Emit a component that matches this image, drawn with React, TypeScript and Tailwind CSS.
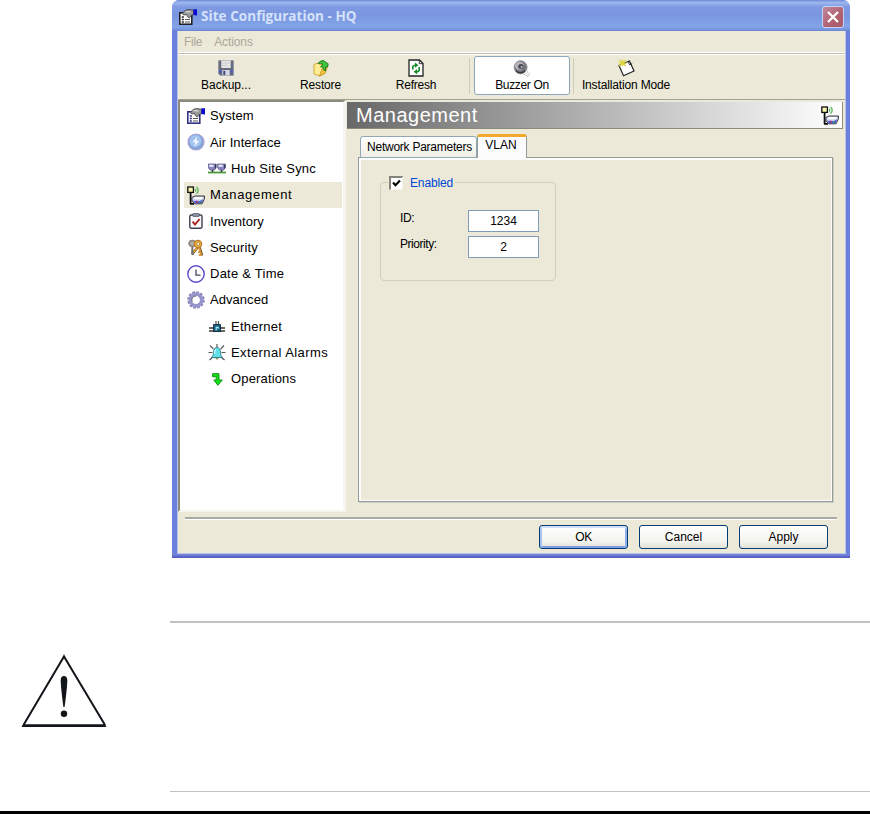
import React from 'react';
import clsx from 'clsx';

interface IconProps {
  className?: string;
}

interface NavItem {
  label: string;
  icon: React.ComponentType<IconProps>;
  tracking: string;
  child?: boolean;
  active?: boolean;
}

interface ToolItem {
  label: string;
  icon: React.ComponentType<IconProps>;
  width: string;
  tracking: string;
  active?: boolean;
}

function PropertiesIcon({ className = 'text-[#26267c]' }: IconProps) {
  return (
    <svg className={className} width="18" height="16" viewBox="0 0 18 16">
      <rect x=".8" y="3.8" width="12" height="11.400" fill="#fff" stroke="currentColor" strokeWidth="1.500" />
      <path d="M2.800 8h2M2.800 10.500h2M2.800 13h2" stroke="currentColor" strokeWidth="1.400" />
      <path d="M6 10.500h5M6 13h5" stroke="#555" strokeWidth="1.200" />
      <path d="M3.500 4.200 6.500 1.200 10 .6l4.500.6v4.600L12 6.500 10.500 9 8.500 7.800 7.500 5.500 4.500 6z" fill="#9a9a9a" stroke="#3a3a3a" strokeWidth=".8" />
      <path d="M6.500 2.800h5" stroke="#dcdcdc" strokeWidth="1.200" />
      <path d="M14.400.2H18V6.500l-3.600-.5z" fill="#0b0bd2" />
    </svg>
  );
}

function AirIcon({ className }: IconProps) {
  return (
    <svg className={className} width="18" height="18" viewBox="0 0 18 18">
      <circle cx="9" cy="9" r="8" fill="#86a4dc" stroke="#a9a2d2" strokeWidth="1.200" />
      <circle cx="8.500" cy="8" r="6" fill="#a3c4ee" />
      <path d="M10.300 3.500 5.500 9.300h2.800L7.300 14l5-6.300H9.400z" fill="#f4f9ff" />
    </svg>
  );
}

function HubIcon({ className }: IconProps) {
  return (
    <svg className={className} width="18" height="11" viewBox="0 0 18 11">
      <path d="M0 9.500h18" stroke="#4a9a3a" strokeWidth="1.800" />
      <path d="M4.500 6v3M13.500 6v3" stroke="#333" strokeWidth="1.500" />
      <path d="M.4 1h7.800v3.200L6.500 7H2.200L.4 4.800z" fill="#8585c4" stroke="#5a5a82" strokeWidth=".8" />
      <path d="M9.600 1h7.800v3.200L15.700 7h-4.300L9.600 4.800z" fill="#8585c4" stroke="#5a5a82" strokeWidth=".8" />
      <path d="M1.300 2.800h4.200M10.500 2.800h4.200" stroke="#eeeeff" strokeWidth="2" />
      <path d="M7.500 1.500v4M16.700 1.500v4" stroke="#333355" strokeWidth="1.200" />
    </svg>
  );
}

function ManagementIcon({ className }: IconProps) {
  return (
    <svg className={className} width="18" height="19" viewBox="0 0 18 19">
      <path d="M3.600 6v12M3 17.800h4" stroke="#111" strokeWidth="1.800" fill="none" />
      <rect x=".8" y="1" width="5.600" height="5.400" fill="#faf5ae" stroke="#111" strokeWidth="1.300" />
      <path d="M8 3q1.500 1.200 0 2.600M9.500 1q3.400 3 0 6.600" fill="none" stroke="#55b455" strokeWidth="1.300" />
      <path d="M4.800 11.500 8 10h9.500l-.3 3.500-2.200 4.300H7.500L5 15z" fill="#cfd5ee" stroke="#222" strokeWidth=".9" />
      <path d="M7 11.700 8.500 11h7.500l-1.500 2.300H7.500z" fill="#fff" />
      <path d="m5.500 13.500 2.300 3.700h6.700l1.800-4-2.300 1.300-2 .7-2.500-.7-2 .7z" fill="#4a52e0" />
      <path d="M9 15.800h2" stroke="#e03a3a" strokeWidth="1.300" />
      <path d="M12.200 16.200h2" stroke="#2aa855" strokeWidth="1.300" />
    </svg>
  );
}

function InventoryIcon({ className }: IconProps) {
  return (
    <svg className={className} width="14" height="16" viewBox="0 0 14 16">
      <rect x=".8" y="2" width="12.200" height="13.200" rx="1.400" fill="#fafaff" stroke="#3c4250" strokeWidth="1.400" />
      <rect x="3.500" y=".6" width="7" height="2.800" rx="1" fill="#8f97aa" stroke="#3c4250" strokeWidth=".7" />
      <path d="m3.600 8.600 2.400 3L10.600 6" fill="none" stroke="#ab2020" strokeWidth="1.900" />
    </svg>
  );
}

function SecurityIcon({ className }: IconProps) {
  return (
    <svg className={className} width="16" height="18" viewBox="0 0 16 18">
      <path d="M4.500 7 4 15.500M4 12.500h2M4 15h2" stroke="#77746e" strokeWidth="2" />
      <ellipse cx="4.300" cy="4.500" rx="3.200" ry="3" fill="#b0aca4" stroke="#8a867e" strokeWidth="1.600" />
      <path d="M11.500 8 14 16.500M10 8l-4.500 5.500" stroke="#6e5028" strokeWidth="2.600" />
      <path d="M11 8l2.300 8.500M9.800 8l-4 5" stroke="#e2a03a" strokeWidth="1.800" />
      <path d="M12.500 12.500l-2.500 1M13 15.500l-2.200 1" stroke="#c98a28" strokeWidth="1.400" />
      <circle cx="10" cy="5" r="3.700" fill="#eeb040" stroke="#b87f2a" strokeWidth="1.200" />
      <circle cx="10.200" cy="4.800" r="1.500" fill="#fff5dc" stroke="#8a6020" strokeWidth=".6" />
    </svg>
  );
}

function ClockIcon({ className }: IconProps) {
  return (
    <svg className={className} width="18" height="18" viewBox="0 0 18 18">
      <circle cx="9" cy="9" r="8.200" fill="#fdfdff" stroke="#5f48c8" strokeWidth="1.400" />
      <path d="M9 4.500v5.700h4.500" fill="none" stroke="#45455c" strokeWidth="1.300" />
    </svg>
  );
}

function GearIcon({ className }: IconProps) {
  return (
    <svg className={className} width="18" height="18" viewBox="0 0 18 18">
      <circle cx="9" cy="9" r="7.500" fill="none" stroke="#8686bc" strokeWidth="2.400" strokeDasharray="2.700 1.228" />
      <circle cx="9" cy="9" r="5.600" fill="none" stroke="#9696cc" strokeWidth="3.800" />
      <circle cx="8.800" cy="9" r="3.800" fill="#fff" />
      <path d="M5.200 10.500A3.900 3.900 0 0 1 9 5" fill="none" stroke="#666" strokeWidth="1" />
    </svg>
  );
}

function EthernetIcon({ className }: IconProps) {
  return (
    <svg className={className} width="16" height="12" viewBox="0 0 16 12">
      <path d="M0 7h5M11 7h5" stroke="#333" strokeWidth="1.400" />
      <path d="M0 10h16" stroke="#444" strokeWidth="1.600" />
      <path d="M7 0v4M9.500 0v4" stroke="#555" strokeWidth="1.200" />
      <rect x="4.600" y="3.600" width="6.800" height="6.800" fill="#186488" stroke="#123" strokeWidth=".9" />
      <path d="M7.200 9.500V6.300h2v1.500" fill="none" stroke="#a8e4fa" strokeWidth="1.200" />
    </svg>
  );
}

function AlarmIcon({ className }: IconProps) {
  return (
    <svg className={className} width="18" height="18" viewBox="0 0 18 18">
      <path d="m2 1.500 3.500 3.700M16 1.500l-3.500 3.700M.5 8.500h4M13.500 8.500h4M1.500 16 5 13M16.500 16 13 13M9 0v3" stroke="#555" strokeWidth="1.200" />
      <path d="M3.500 13.500q2-1.500 2-5Q5.700 3.500 9 3.500t3.500 5q0 3.500 2 5z" fill="#62e0ea" stroke="#2c7c88" strokeWidth=".9" />
      <path d="M7.500 5.500q-1 2-1 4.500" fill="none" stroke="#d4fbff" strokeWidth="1.200" />
      <path d="M7.500 14q1.500 2.600 3 0" fill="#e8d850" stroke="#555" strokeWidth=".8" />
    </svg>
  );
}

function OperationsIcon({ className }: IconProps) {
  return (
    <svg className={className} width="11" height="13" viewBox="0 0 11 13">
      <path d="M.6.700h6.400v6.300h3.300L5.900 12.300 1.800 7h2.400V3.700H.6z" fill="#14e014" stroke="#0a8a0a" strokeWidth=".9" />
    </svg>
  );
}

function BackupIcon({ className }: IconProps) {
  return (
    <svg className={className} width="16" height="16" viewBox="0 0 16 16">
      <path d="M.7.700h14.600v14.600H2.200L.7 13.800z" fill="#666a7c" stroke="#7a7e90" strokeWidth=".8" />
      <rect x="3.300" y=".5" width="9.400" height="7.500" fill="#e6e6e6" />
      <path d="M4.500 3h7M4.500 5.500h5" stroke="#cacad0" />
      <rect x="4.300" y="10" width="7.400" height="5.500" fill="#d5d8e4" />
      <rect x="5.300" y="10.800" width="2" height="4.200" fill="#444a78" />
      <path d="M1.200 11.500h2M12.800 11.500h2" stroke="#3b55f0" strokeWidth="2.200" />
    </svg>
  );
}

function RestoreIcon({ className }: IconProps) {
  return (
    <svg className={className} width="16" height="17" viewBox="0 0 16 17">
      <path d="M1 4.500 5 3l1.500 1.500 4.500-.3v9l-4 2.800-6-2z" fill="#fdeb96" stroke="#cfa028" strokeWidth=".9" />
      <path d="m6.500 16 2.800-7.500 5-1-2.300 6z" fill="#f4c23c" stroke="#c09020" strokeWidth=".8" />
      <path d="M5 3.500Q6.500.6 10 .7L9.700 0l5.500 3.800-.5 3.200h-2.200v4q-2.500-.5-2.800-4H7.500L10 4Q7 3 5 3.500z" fill="#3fc43f" stroke="#147014" strokeWidth=".8" />
    </svg>
  );
}

function RefreshIcon({ className }: IconProps) {
  return (
    <svg className={className} width="16" height="18" viewBox="0 0 16 18">
      <path d="M1 1h10.500L15 4.500V17H1z" fill="#fff" stroke="#222" strokeWidth="1.300" />
      <path d="M11.300 1v3.700H15" fill="none" stroke="#222" strokeWidth=".9" />
      <path d="M4.800 10.500V8q0-1.800 2.500-1.800M11.200 8v2.700q0 2-2.500 2" fill="none" stroke="#168a26" strokeWidth="1.600" />
      <path d="M7 3.600v5.200l3.400-2.600zM9 10.100v5.200l-3.400-2.600z" fill="#168a26" />
    </svg>
  );
}

function BuzzerIcon({ className }: IconProps) {
  return (
    <svg className={className} width="18" height="17" viewBox="0 0 18 17">
      <ellipse cx="7.600" cy="7.300" rx="6.500" ry="6.600" fill="#77777f" stroke="#9a9aa2" />
      <ellipse cx="6.500" cy="5.800" rx="4.600" ry="4" fill="#b4b4bc" />
      <ellipse cx="8" cy="6.500" rx="2.800" ry="2.500" fill="#4a4a54" />
      <circle cx="8.600" cy="7" r="1" fill="#c8c8ce" />
      <path d="M3 11q5 3.800 9-.5" fill="none" stroke="#3a3a40" strokeWidth="1.300" />
      <path d="m11 15 4-3.500M13 16l4-3M14.500 16.500l2-1.200" stroke="#999" strokeWidth=".9" strokeDasharray="1.200 .8" />
    </svg>
  );
}

function InstallIcon({ className }: IconProps) {
  return (
    <svg className={className} width="18" height="18" viewBox="0 0 18 18">
      <path d="M2 6.500 12.500 2l4.500 10L6.500 16.800z" fill="#fff" stroke="#222" strokeWidth="1.200" />
      <path d="m11.300 2.500 1.200 3.300 2.700-1" fill="none" stroke="#222" strokeWidth=".9" />
      <path d="M5.500.5v7M1.500 4h8.500M2.300 1l6.500 6M8.800 1l-6.500 6" stroke="#dcd43a" strokeWidth="1.200" />
    </svg>
  );
}

const navItems: NavItem[] = [
  { label: 'System', icon: PropertiesIcon, tracking: 'tracking-[0.05px]' },
  { label: 'Air Interface', icon: AirIcon, tracking: 'tracking-[0.05px]' },
  { label: 'Hub Site Sync', icon: HubIcon, tracking: 'tracking-[0.2px]', child: true },
  { label: 'Management', icon: ManagementIcon, tracking: 'tracking-[0.65px]', active: true },
  { label: 'Inventory', icon: InventoryIcon, tracking: 'tracking-[0.05px]' },
  { label: 'Security', icon: SecurityIcon, tracking: 'tracking-[0.1px]' },
  { label: 'Date & Time', icon: ClockIcon, tracking: 'tracking-[0.25px]' },
  { label: 'Advanced', icon: GearIcon, tracking: 'tracking-[0.05px]' },
  { label: 'Ethernet', icon: EthernetIcon, tracking: 'tracking-[0.25px]', child: true },
  { label: 'External Alarms', icon: AlarmIcon, tracking: 'tracking-[0.4px]', child: true },
  { label: 'Operations', icon: OperationsIcon, tracking: 'tracking-[0.15px]', child: true },
];

const tools: ToolItem[] = [
  { label: 'Backup...', icon: BackupIcon, width: 'w-[94px]', tracking: 'tracking-normal' },
  { label: 'Restore', icon: RestoreIcon, width: 'w-[95px]', tracking: 'tracking-[-0.15px]' },
  { label: 'Refresh', icon: RefreshIcon, width: 'w-[96px]', tracking: 'tracking-[-0.2px]' },
  { label: 'Buzzer On', icon: BuzzerIcon, width: 'w-[96px]', tracking: 'tracking-[-0.35px]', active: true },
  { label: 'Installation Mode', icon: InstallIcon, width: 'w-[98px]', tracking: 'tracking-[-0.15px]' },
];

function TitleBar() {
  return (
    <div className="flex h-[31px] shrink-0 items-center rounded-t-[7px] bg-[linear-gradient(#6f8ad8_0%,#9db8ee_8%,#7f9ae2_22%,#7a96e0_50%,#82a5e8_85%,#7b98e0_94%,#6883d0_100%)] pt-0.5 pr-[6px] pl-[7px]">
      <PropertiesIcon className="text-[#1a1a1a]" />
      <span className="ml-[4px] flex-1 font-['Open_Sans','Noto_Sans',sans-serif] text-[13.5px] font-bold tracking-[0.05px] whitespace-nowrap text-[#d5e2fa]">
        Site Configuration - HQ
      </span>
      <button className="flex h-[22px] w-[22px] items-center justify-center rounded-[3px] border border-[#c5d2f4] bg-[linear-gradient(135deg,#c08a9c,#b0606e_60%,#a85a68)]">
        <svg width="14" height="14" viewBox="0 0 14 14">
          <path d="m2 2 10 10M12 2 2 12" stroke="#fff" strokeWidth="2.300" />
        </svg>
      </button>
    </div>
  );
}

function Toolbar() {
  return (
    <div className="flex h-[44px] shrink-0 pt-[1px] pl-[1px]">
      {tools.map(({ label, icon: Icon, width, tracking, active }, index) => (
        <React.Fragment key={label}>
          {index >= 3 && (
            <div className={clsx('mt-[2px] h-[36px] w-px bg-[#cfccba]', index === 3 ? 'mr-[4px] ml-[5px]' : 'mr-[3px] ml-[3px]')} />
          )}
          <button
            className={clsx(
              'flex h-[39px] flex-col items-center justify-end rounded-[3px] border pb-[1px]',
              width,
              active ? 'border-[#8ba6bc] bg-white' : 'border-transparent'
            )}
          >
            <span className="flex h-[18px] items-center">
              <Icon />
            </span>
            <span className={clsx('text-[12px] leading-[16px] whitespace-nowrap', tracking)}>{label}</span>
          </button>
        </React.Fragment>
      ))}
    </div>
  );
}

function Sidebar() {
  return (
    <nav className="h-[412px] w-[168px] shrink-0 border-t-2 border-r-[3px] border-b-2 border-l-2 border-t-[#8c8a7c] border-r-[#f6f5ee] border-b-[#f6f5ee] border-l-[#8c8a7c] bg-white pt-[1px] pr-px pl-[4px]">
      {navItems.map(({ label, icon: Icon, tracking, child, active }) => (
        <div
          key={label}
          className={clsx('flex h-[26.3px] items-center', child ? 'pl-[23px]' : 'pl-[2px]', active && 'bg-[#ece9d8]')}
        >
          <span className="flex w-[20px] shrink-0 justify-center">
            <Icon />
          </span>
          <span className={clsx('ml-[4px] text-[13px] whitespace-nowrap', tracking)}>{label}</span>
        </div>
      ))}
    </nav>
  );
}

function Field({ label, value, tracking }: { label: string; value: string; tracking: string }) {
  return (
    <div className="flex h-[26px] items-start">
      <span className={clsx('w-[68px] text-[12px] leading-[16px]', tracking)}>{label}</span>
      <input
        readOnly
        value={value}
        className="h-[22px] w-[71px] border border-[#7f9db9] bg-white text-center text-[12px] outline-none"
      />
    </div>
  );
}

function VlanPanel() {
  return (
    <div className="-mt-px h-[345px] w-[475px] border border-[#919b9c] bg-[#ece9d8] pt-[19px] pl-[21px] shadow-[inset_2px_2px_0_#fcfcfa,inset_-1px_-1px_0_#fcfcfa,1px_1px_0_#d0cfc0]">
      <div className="relative mt-[5px] h-[99px] w-[176px] rounded-[4px] border border-[#d0d0bf] pt-[27px] pl-[19px]">
        <label className="absolute -top-[8px] left-[7px] flex h-[16px] items-center bg-[#ece9d8] pr-[2px] pl-[1px]">
          <span className="flex h-[14px] w-[14px] items-center justify-center border-t-2 border-r border-b border-l-2 border-t-[#85837a] border-r-[#f4f3ea] border-b-[#f4f3ea] border-l-[#85837a] bg-white">
            <svg width="9" height="9" viewBox="0 0 9 9">
              <path d="m1 3.500 2.500 2.700L8 1.500" fill="none" stroke="#000" strokeWidth="2.200" />
            </svg>
          </span>
          <span className="ml-[7px] text-[12px] tracking-[-0.15px] text-[#0046d5]">Enabled</span>
        </label>
        <Field label="ID:" value="1234" tracking="tracking-[-0.4px]" />
        <Field label="Priority:" value="2" tracking="tracking-[-0.45px]" />
      </div>
    </div>
  );
}

function Content() {
  return (
    <main className="flex flex-1 flex-col pt-[2px]">
      <header className="ml-[1px] flex h-[27px] w-[496px] items-center justify-between border-r border-b border-[#8c8a7c] bg-[linear-gradient(90deg,#686868,#ffffff)] pr-[3px] pl-[9px]">
        <h1 className="text-[20px] leading-[26px] tracking-[0.5px] text-white">Management</h1>
        <ManagementIcon />
      </header>
      <div className="mt-[5px] ml-[12px]">
        <div className="flex h-[24px] items-end pl-[2px]">
          <div className="flex h-[22px] w-[117px] items-center justify-center rounded-t-[3px] border border-[#91a7b4] bg-[linear-gradient(#ffffff,#f0efe6)] pl-[2px] text-[12px] tracking-[-0.25px] whitespace-nowrap">
            Network Parameters
          </div>
          <div className="relative z-10 flex h-[24px] w-[50px] justify-center rounded-t-[3px] border-x border-t-[3px] border-x-[#919b9c] border-t-[#f5a92c] bg-[#fcfcfe] pr-[2px] text-[12px] leading-[16px]">
            VLAN
          </div>
        </div>
        <VlanPanel />
      </div>
    </main>
  );
}

function DialogButton({ label, primary, tracking }: { label: string; primary?: boolean; tracking?: string }) {
  return (
    <button
      className={clsx(
        'h-[24px] w-[89px] rounded-[3px] border border-[#003c74] bg-[linear-gradient(#ffffff,#f3f3ef_70%,#e2dfd4)] text-[12px] leading-[20px]',
        primary && 'shadow-[inset_0_2px_0_#cee0fb,inset_2px_0_0_#a5c2f2,inset_-2px_0_0_#8fb0ec,inset_0_-2px_0_#7f9fe0]',
        tracking
      )}
    >
      {label}
    </button>
  );
}

function ConfigWindow() {
  return (
    <div className="ml-[172px] flex h-[558px] w-[678px] shrink-0 flex-col rounded-t-[8px] bg-[#6b7fdc]">
      <TitleBar />
      <div className="mr-[4px] ml-[5px] flex h-[523px] flex-col border-x border-b border-[#b9c3ea] bg-[#ece9d8]">
        <div className="flex h-[21px] items-center gap-[13px] pl-[6px] text-[12px] text-[#aca899]">
          <span className="tracking-[-0.3px]">File</span>
          <span className="-ml-[1px] tracking-[-0.1px]">Actions</span>
        </div>
        <div className="h-[3px] shrink-0 border-y border-y-white bg-[#c0beb0]" />
        <Toolbar />
        <div className="flex h-[412px] shrink-0 border-t border-t-[#a3a194]">
          <Sidebar />
          <Content />
        </div>
        <div className="mt-[6px] mr-[8px] ml-[7px] h-[3px] shrink-0 border-t-2 border-b border-t-[#aaa9a2] border-b-white" />
        <div className="mt-[5px] flex justify-end gap-[11px] pr-[17px]">
          <DialogButton label="OK" primary tracking="tracking-[-0.5px]" />
          <DialogButton label="Cancel" />
          <DialogButton label="Apply" />
        </div>
      </div>
      <div className="h-[4px] bg-[linear-gradient(#7b8be0,#4f55bd)]" />
    </div>
  );
}

function WarningIcon() {
  return (
    <svg width="86" height="74" viewBox="0 0 86 74">
      <path d="M43 2.500 2.500 71M43 2.500 84 71" fill="none" stroke="#111418" strokeWidth="2" />
      <path d="m43 0-1.500 3.500h3z" fill="#111418" />
      <path d="M.5 73 2 70.200h82l1.500 2.800z" fill="#111418" />
      <path d="M39.700 26.500q0-4.500 3.300-4.500t3.300 4.500q0 6-2.700 26.500h-1.200Q39.700 32.500 39.700 26.500z" fill="#111418" />
      <circle cx="43" cy="59.700" r="3.200" fill="#111418" />
    </svg>
  );
}

export default function App() {
  return (
    <div className="flex h-[814px] w-[870px] flex-col overflow-hidden bg-white font-['Liberation_Sans',Arial,sans-serif] text-black">
      <ConfigWindow />
      <section className="mt-[63px] flex h-[171px] shrink-0">
        <div className="w-[170px] shrink-0 pt-[33px] pl-[21px]">
          <WarningIcon />
        </div>
        <div className="flex-1 border-t-2 border-b border-[#c0c0c0]" />
      </section>
      <div className="mt-auto h-[3px] bg-black" />
    </div>
  );
}
